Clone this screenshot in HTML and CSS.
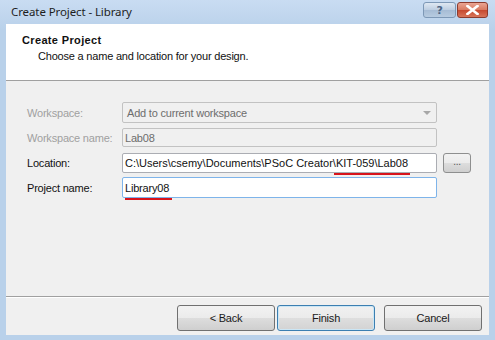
FILE: index.html
```html
<!DOCTYPE html>
<html lang="en">
<head>
    <meta charset="UTF-8">
    <meta name="viewport" content="width=device-width, initial-scale=1.0">
    <title>Create Project - Library</title>
    <link rel="stylesheet" href="styles.css">
</head>
<body>
    <div class="window">
        <div class="titlebar">
            <span class="title">Create Project - Library</span>
            <div class="caption-buttons">
                <span class="cap-btn cap-help">?</span>
                <span class="cap-btn cap-close">
                    <svg width="13" height="10" viewBox="0 0 13 10">
                        <path d="M1.5 1 L11.5 9 M11.5 1 L1.5 9" stroke="#fff" stroke-width="2.6" stroke-linecap="square"/>
                    </svg>
                </span>
            </div>
        </div>
        <div class="client">
            <div class="header">
                <div class="header-title">Create Project</div>
                <div class="header-sub">Choose a name and location for your design.</div>
            </div>
            <div class="form">
                <div class="form-row">
                    <span class="label disabled">Workspace:</span>
                    <div class="field field-disabled combo">
                        <span>Add to current workspace</span>
                        <span class="combo-arrow"></span>
                    </div>
                </div>
                <div class="form-row">
                    <span class="label disabled">Workspace name:</span>
                    <div class="field field-disabled"><span>Lab08</span></div>
                </div>
                <div class="form-row">
                    <span class="label">Location:</span>
                    <div class="field path"><span>C:\Users\csemy\Documents\PSoC Creator\<span class="mark">KIT-059\Lab08</span></span></div>
                    <span class="browse">...</span>
                </div>
                <div class="form-row">
                    <span class="label">Project name:</span>
                    <div class="field field-focus"><span class="mark mark-low">Library08</span></div>
                </div>
            </div>
            <div class="footer">
                <span class="btn">&lt; Back</span>
                <span class="btn btn-default">Finish</span>
                <span class="btn btn-cancel">Cancel</span>
            </div>
        </div>
    </div>
</body>
</html>
```

FILE: styles.css
```css
* {
    box-sizing: border-box;
}

body {
    margin: 0;
    font-family: 'Liberation Sans', Arial, sans-serif;
    font-size: 11px;
    letter-spacing: -0.2px;
    color: #111111;
    background-color: #b9d1ea;
}

.window {
    width: 495px;
    height: 340px;
    display: flex;
    flex-direction: column;
    background: linear-gradient(#c9dcf2, #b9d1ea 30px);
}

/* title bar */

.titlebar {
    height: 24px;
    display: flex;
    align-items: flex-start;
    justify-content: space-between;
    padding: 0 7px 0 11px;
}

.title {
    font-family: 'Noto Sans', sans-serif;
    font-size: 11.5px;
    letter-spacing: -0.1px;
    line-height: 16px;
    margin-top: 4px;
    color: #1e1e1e;
}

.caption-buttons {
    display: flex;
    gap: 1px;
    margin-top: 2px;
}

.cap-btn {
    height: 16px;
    display: flex;
    align-items: center;
    justify-content: center;
    border-radius: 3px;
}

.cap-help {
    width: 33px;
    border: 1px solid #7d98b6;
    background: linear-gradient(#dfe8f2, #bccde1 50%, #a6bcd5 51%, #b7cbe0);
    font-family: 'DejaVu Sans', sans-serif;
    font-size: 11px;
    font-weight: bold;
    color: #4c6584;
}

.cap-close {
    width: 31px;
    border: 1px solid #8c3b2e;
    background: linear-gradient(#eaa593, #d87960 50%, #c6482e 51%, #d8755a);
}

/* client area */

.client {
    flex: 1;
    margin: 0 6px 5px 6px;
    display: flex;
    flex-direction: column;
    background-color: #f0f0f0;
}

.header {
    height: 57px;
    padding: 10px 0 0 16px;
    background-color: #ffffff;
    border-bottom: 1px solid #a0a0a0;
}

.header-title {
    font-weight: bold;
    letter-spacing: 0.35px;
    line-height: 13px;
}

.header-sub {
    margin-top: 3px;
    padding-left: 16px;
    line-height: 13px;
}

.form {
    flex: 1;
    display: flex;
    flex-direction: column;
    gap: 4px;
    padding: 21px 0 0 21px;
    border-bottom: 1px solid #a0a0a0;
}

.form-row {
    display: flex;
    align-items: center;
    height: 21px;
}

.label {
    width: 95px;
}

.disabled {
    color: #a0a0a0;
}

.field {
    width: 315px;
    height: 20px;
    display: flex;
    align-items: center;
    padding: 0 2px;
    background-color: #ffffff;
    border: 1px solid #abadb3;
    border-radius: 2px;
    white-space: nowrap;
}

.field-disabled {
    height: 19px;
    background-color: #f0f0f0;
    border-color: #c2c2c2;
    color: #6d6d6d;
}

.combo {
    height: 21px;
    justify-content: space-between;
    padding-left: 4px;
    padding-right: 5px;
}

.combo-arrow {
    width: 0;
    height: 0;
    border-left: 4px solid transparent;
    border-right: 4px solid transparent;
    border-top: 4px solid #a7a7a7;
}

.field-focus {
    height: 21px;
    border-color: #7eb4ea;
}

.path span {
    letter-spacing: 0;
}

.mark {
    position: relative;
}

.mark::after {
    content: "";
    position: absolute;
    left: -2px;
    right: -2px;
    bottom: -6px;
    height: 2px;
    background-color: #d8141b;
}

.mark-low::after {
    left: 0;
    bottom: -6px;
    right: -3px;
}

.browse {
    width: 28px;
    height: 20px;
    margin-left: 6px;
    display: flex;
    align-items: center;
    justify-content: center;
    padding-bottom: 3px;
    font-size: 10px;
    color: #555555;
    border: 1px solid #8e8f8f;
    border-radius: 3px;
    background: linear-gradient(#f2f2f2, #ebebeb 50%, #dddddd 51%, #cfcfcf);
}

/* footer */

.footer {
    height: 38px;
    display: flex;
    justify-content: flex-end;
    align-items: flex-start;
    gap: 2px;
    padding: 7px 7px 0 0;
    border-top: 1px solid #ffffff;
}

.btn {
    width: 98px;
    height: 26px;
    display: flex;
    align-items: center;
    justify-content: center;
    border: 1px solid #707070;
    border-radius: 3px;
    background: linear-gradient(#f2f2f2, #ebebeb 50%, #dddddd 51%, #cfcfcf);
    color: #1a1a1a;
}

.btn-default {
    border-color: #3c7fb1;
    box-shadow: inset 0 0 0 1px #cbe6f5;
    background: linear-gradient(#f1f1f1, #ebebeb 50%, #dedede 51%, #d3d3d3);
}

.btn-cancel {
    margin-left: 7px;
}
```
